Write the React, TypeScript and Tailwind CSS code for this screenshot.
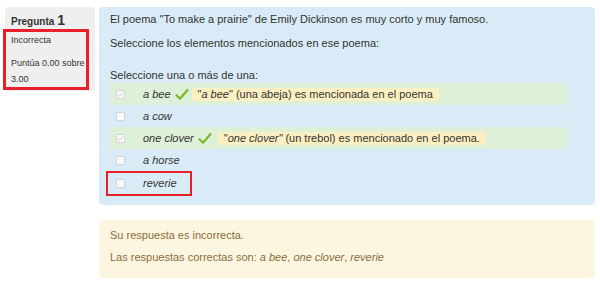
import React from "react";

const Box = ({ checked }: { checked?: boolean }) => (
  <span className="inline-flex h-[9px] w-[9px] items-center justify-center rounded-[1px] border border-[#d4d4d4] bg-[#fafafa]">
    {checked && (
      <svg width="7" height="7" viewBox="0 0 7 7">
        <path d="M1 3.6 L2.8 5.3 L6 1.5" fill="none" stroke="#c8c8c8" strokeWidth="1" />
      </svg>
    )}
  </span>
);

const Tick = () => (
  <svg width="14" height="13" viewBox="0 0 14 13" className="ml-[4px]">
    <path d="M1.5 7.2 L5 10.8 L12.5 2" fill="none" stroke="#7cb82f" strokeWidth="2.2" strokeLinecap="round" strokeLinejoin="round" />
  </svg>
);

export default function App() {
  return (
    <div className="flex h-[281px] w-[600px] bg-white pt-[7px] text-[11px] text-[#333] font-['Liberation_Sans',Arial,sans-serif]">
      <div className="ml-[5px] flex h-[84px] w-[90px] flex-col rounded-[3px] bg-[#efefef]">
        <div className="ml-[6px] mt-[6px] flex items-baseline font-bold">
          <span className="text-[10px]">Pregunta</span>
          <span className="ml-[3px] text-[14px] leading-none">1</span>
        </div>
        <div className="ml-[-2px] mt-[0px] h-[61px] w-[86px] border-[3px] border-[#e8202a] pl-[5px] pt-[0px] text-[9px] leading-[16px]">
          <div className="whitespace-nowrap">Incorrecta</div>
          <div className="mt-[7px] whitespace-nowrap">Puntúa 0.00 sobre</div>
          <div>3.00</div>
        </div>
      </div>
      <div className="ml-[4px] flex w-[496px] flex-col">
        <div className="h-[198px] rounded-[4px] bg-[#d9ebf6] pl-[11px] pr-[28px] pt-[5px]">
          <p className="leading-[15px]">El poema "To make a prairie" de Emily Dickinson es muy corto y muy famoso.</p>
          <p className="mt-[9px] leading-[15px]">Seleccione los elementos mencionados en ese poema:</p>
          <p className="mt-[17px] leading-[15px]">Seleccione una o más de una:</p>
          <div className="flex flex-col">
            <div className="flex h-[22px] items-center bg-[#dff0d8] pl-[6px]">
              <Box checked />
              <span className="ml-[18px] italic">a bee</span>
              <Tick />
              <span className="ml-[3px] bg-[#fcf0c2] px-[6px] leading-[13px]">
                "<i>a bee</i>" (una abeja) es mencionada en el poema
              </span>
            </div>
            <div className="flex h-[22px] items-center pl-[6px]">
              <Box />
              <span className="ml-[18px] italic">a cow</span>
            </div>
            <div className="flex h-[22px] items-center bg-[#dff0d8] pl-[6px]">
              <Box checked />
              <span className="ml-[18px] italic">one clover</span>
              <Tick />
              <span className="ml-[6px] bg-[#fcf0c2] px-[6px] leading-[13px]">
                "<i>one clover"</i> (un trebol) es mencionado en el poema.
              </span>
            </div>
            <div className="flex h-[22px] items-center pl-[6px]">
              <Box />
              <span className="ml-[18px] italic">a horse</span>
            </div>
            <div className="ml-[-4px] flex h-[25px] w-[86px] items-center border-[2px] border-[#e8202a] pl-[8px]">
              <Box />
              <span className="ml-[18px] italic">reverie</span>
            </div>
          </div>
        </div>
        <div className="mt-[15px] h-[58px] rounded-[4px] bg-[#fcf6e1] pl-[11px] pt-[8px] text-[#8a6d3b]">
          <p className="leading-[15px]">Su respuesta es incorrecta.</p>
          <p className="mt-[7px] leading-[15px]">
            Las respuestas correctas son: <i>a bee</i>, <i>one clover</i>, <i>reverie</i>
          </p>
        </div>
      </div>
    </div>
  );
}
